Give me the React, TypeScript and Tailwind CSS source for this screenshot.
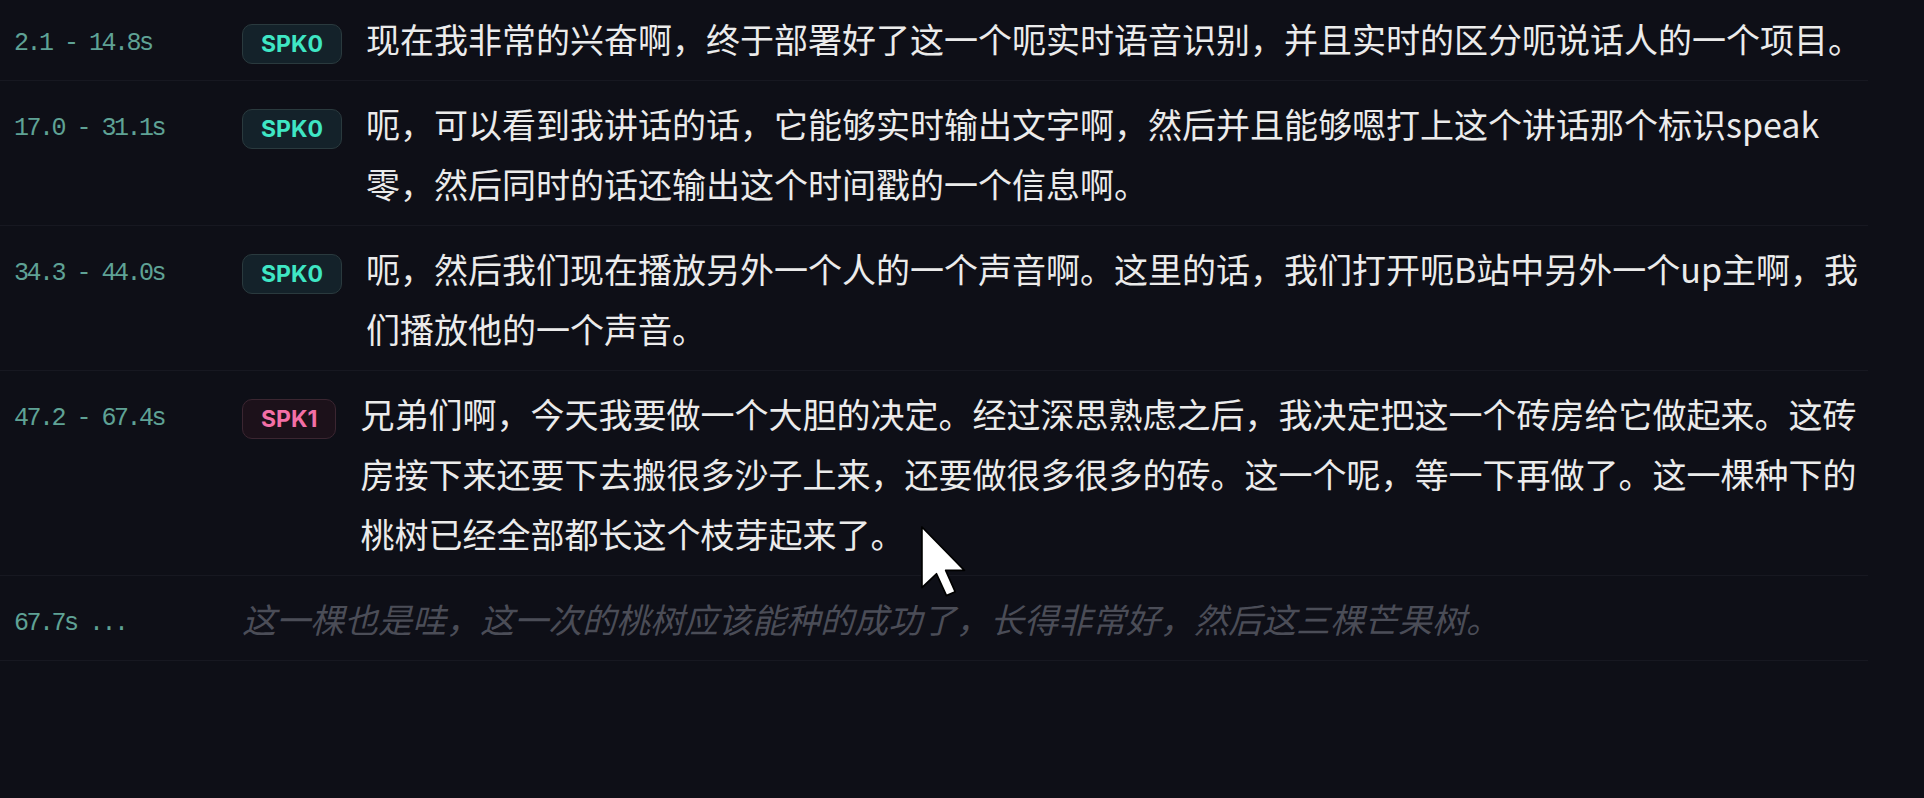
import React from "react";

type Row = { time: string; spk: 0 | 1 | null; text: string };

const rows: Row[] = [
  {
    time: "2.1 - 14.8s",
    spk: 0,
    text: "现在我非常的兴奋啊，终于部署好了这一个呃实时语音识别，并且实时的区分呃说话人的一个项目。",
  },
  {
    time: "17.0 - 31.1s",
    spk: 0,
    text: "呃，可以看到我讲话的话，它能够实时输出文字啊，然后并且能够嗯打上这个讲话那个标识speak零，然后同时的话还输出这个时间戳的一个信息啊。",
  },
  {
    time: "34.3 - 44.0s",
    spk: 0,
    text: "呃，然后我们现在播放另外一个人的一个声音啊。这里的话，我们打开呃B站中另外一个up主啊，我们播放他的一个声音。",
  },
  {
    time: "47.2 - 67.4s",
    spk: 1,
    text: "兄弟们啊，今天我要做一个大胆的决定。经过深思熟虑之后，我决定把这一个砖房给它做起来。这砖房接下来还要下去搬很多沙子上来，还要做很多很多的砖。这一个呢，等一下再做了。这一棵种下的桃树已经全部都长这个枝芽起来了。",
  },
  {
    time: "67.7s ...",
    spk: null,
    text: "这一棵也是哇，这一次的桃树应该能种的成功了，长得非常好，然后这三棵芒果树。",
  },
];

function Badge({ spk }: { spk: 0 | 1 }) {
  if (spk === 0) {
    return (
      <div className="mt-[15px] flex h-[40px] shrink-0 items-center rounded-[10px] border border-[#2a3a3e] bg-[#14222a] px-[18px] font-['Inter',sans-serif] text-[23px] font-bold leading-none text-[#3fe6c4]">
        SPK0
      </div>
    );
  }
  return (
    <div className="mt-[15px] flex h-[40px] shrink-0 items-center rounded-[10px] border border-[#3b2631] bg-[#1c111a] px-[18px] font-['Inter',sans-serif] text-[23px] font-bold leading-none text-[#f36fa6]">
      SPK1
    </div>
  );
}

export default function App() {
  return (
    <div className="relative h-[798px] w-full overflow-hidden bg-[#0e0f17]">
      <div className="-mt-[4px] w-[1868px]">
        {rows.map((r, i) => (
          <div
            key={i}
            className="flex items-start border-b border-[#171821] pb-[11px] pl-[14px] pt-[13px]"
          >
            <div className="w-[228px] shrink-0 whitespace-pre pt-[15px] font-['Liberation_Mono',monospace] text-[25px] leading-[40px] tracking-[-2.5px] text-[#5fa295]">
              {r.time}
            </div>
            {r.spk !== null ? (
              <>
                <Badge spk={r.spk} />
                <div className="ml-[24px] min-w-0 flex-1 font-['Noto_Sans_CJK_SC','Noto_Sans',sans-serif] text-[34px] leading-[60px] text-[#ebebeb]">
                  {r.text}
                </div>
              </>
            ) : (
              <div className="min-w-0 flex-1 font-['Noto_Sans_CJK_SC','Noto_Sans',sans-serif] text-[34px] italic leading-[60px] text-[#4b4d57]">
                {r.text}
              </div>
            )}
          </div>
        ))}
      </div>

      <svg
        className="absolute left-[920px] top-[525px]"
        width="46"
        height="73"
        viewBox="0 0 12 19"
      >
        <path
          d="M0.5 0.5 L0.5 16.3 L4.3 12.7 L6.9 18.4 L9.2 17.4 L6.7 11.8 L11.6 11.8 Z"
          fill="#ffffff"
          stroke="#000000"
          strokeWidth="0.45"
          strokeLinejoin="round"
        />
      </svg>
    </div>
  );
}
